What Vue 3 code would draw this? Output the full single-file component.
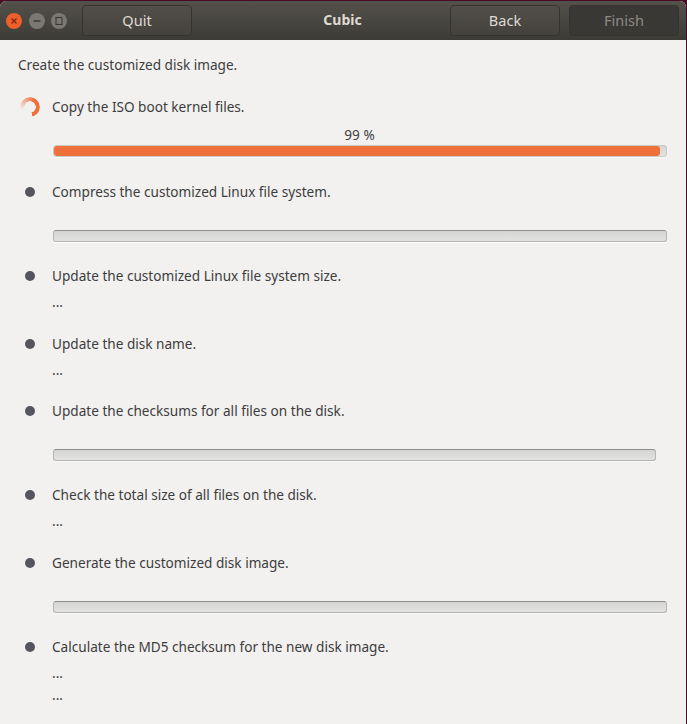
<template>
  <div class="window">
    <header class="titlebar">
      <div class="win-controls">
        <span class="win-btn close"><svg width="10" height="10" viewBox="0 0 10 10"><path d="M2.5 2.5l5 5M7.5 2.5l-5 5" stroke="#7a2a10" stroke-width="1.3" fill="none"/></svg></span>
        <span class="win-btn"><svg width="10" height="10" viewBox="0 0 10 10"><path d="M1.5 5h7" stroke="#3a3833" stroke-width="1.3" fill="none"/></svg></span>
        <span class="win-btn"><svg width="10" height="10" viewBox="0 0 10 10"><rect x="2" y="1.5" width="6" height="7" stroke="#3a3833" stroke-width="1.1" fill="none"/></svg></span>
      </div>
      <button class="head-btn quit">Quit</button>
      <div class="title">Cubic</div>
      <button class="head-btn">Back</button>
      <button class="head-btn finish" disabled>Finish</button>
    </header>

    <main class="content">
      <p class="intro">Create the customized disk image.</p>

      <div v-for="step in steps" :key="step.label" class="step">
        <div class="step-row">
          <span class="step-icon">
            <span v-if="step.active" class="spinner"></span>
            <span v-else class="dot"></span>
          </span>
          <span class="step-label">{{ step.label }}</span>
        </div>

        <div v-if="step.percent" class="percent">{{ step.percent }} %</div>
        <div v-if="step.bar" class="bar" :class="{ narrow: step.narrow, first: step.percent }">
          <div v-if="step.percent" class="fill" :style="{ width: step.percent + '%' }"></div>
        </div>
        <div v-for="n in step.dots" :key="n" class="dots">...</div>
      </div>
    </main>
  </div>
</template>

<script setup>
const steps = [
  { label: 'Copy the ISO boot kernel files.', active: true, bar: true, percent: 99 },
  { label: 'Compress the customized Linux file system.', bar: true },
  { label: 'Update the customized Linux file system size.', dots: 1 },
  { label: 'Update the disk name.', dots: 1 },
  { label: 'Update the checksums for all files on the disk.', bar: true, narrow: true },
  { label: 'Check the total size of all files on the disk.', dots: 1 },
  { label: 'Generate the customized disk image.', bar: true },
  { label: 'Calculate the MD5 checksum for the new disk image.', dots: 2 }
]
</script>

<style>
html, body {
  margin: 0;
  background: #4a0a24;
}
</style>

<style scoped>
.window {
  width: 686px;
  height: 723px;
  margin-top: 1px;
  box-sizing: border-box;
  display: flex;
  flex-direction: column;
  background: #f2f1f0;
  border-radius: 6px 6px 0 0;
  overflow: hidden;
  font-family: "Noto Sans", sans-serif;
}
.titlebar {
  height: 39px;
  flex: none;
  display: flex;
  align-items: center;
  padding: 0 7px 0 6px;
  box-sizing: border-box;
  background: linear-gradient(#54514b, #3c3b36);
}
.win-controls {
  display: flex;
  gap: 6.5px;
  margin-right: 15px;
}
.win-btn {
  width: 16px;
  height: 16px;
  border-radius: 50%;
  display: flex;
  align-items: center;
  justify-content: center;
  background: #7a7871;
}
.win-btn.close {
  background: #ee5f2c;
}
.head-btn {
  width: 110px;
  height: 31px;
  box-sizing: border-box;
  border: 1px solid #35342f;
  border-radius: 4px;
  background: linear-gradient(#524f49, #44423d);
  color: #dfdbd2;
  font-family: inherit;
  font-size: 14.5px;
  padding: 0 0 2px;
}
.head-btn.finish {
  margin-left: 9px;
  background: #393834;
  color: #8d8a83;
}
.title {
  flex: 1;
  text-align: center;
  color: #dfdbd2;
  font-size: 14px;
  font-weight: 700;
  padding: 0 0 2px 43px;
}
.content {
  flex: 1;
  padding: 15px 19px 0 18px;
  color: #3d3d3d;
  font-size: 13.6px;
}
.intro {
  margin: 0 0 22px;
  line-height: 20px;
}
.step {
  margin-bottom: 21.5px;
}
.step-row {
  display: flex;
  align-items: center;
  height: 20px;
}
.step-label {
  padding-bottom: 1px;
}
.step-icon {
  width: 34px;
  flex: none;
  display: flex;
  justify-content: center;
  padding-right: 11px;
  box-sizing: border-box;
}
.dot {
  width: 10px;
  height: 10px;
  border-radius: 50%;
  background: #55555f;
}
.spinner {
  width: 20px;
  height: 20px;
  border-radius: 50%;
  background: conic-gradient(from 250deg, rgba(240, 110, 60, 0) 0deg, #f0703c 140deg, #f0703c 275deg, rgba(240, 110, 60, 0) 276deg);
  -webkit-mask: radial-gradient(circle, transparent 5.5px, #000 6px);
  mask: radial-gradient(circle, transparent 5.5px, #000 6px);
}
.percent {
  margin: 8px 0 0 34px;
  text-align: center;
  line-height: 20px;
}
.bar {
  margin: 28px 0 24px 35px;
  height: 12px;
  box-sizing: border-box;
  border: 1px solid #b4b4b0;
  border-top-color: #8f8f8b;
  border-radius: 3px;
  background: linear-gradient(#d5d6d3, #e2e3e0);
  box-shadow: 0 1px 0 #fbfbfa;
  overflow: hidden;
}
.bar.first {
  margin-top: 0;
  margin-bottom: 25px;
  border-color: #c9c9c6;
}
.bar.narrow {
  margin-right: 11px;
}
.fill {
  height: 100%;
  background: #f0703c;
  border-radius: 3px;
}
.dots {
  margin: 6px 0 0 34px;
  line-height: 20px;
}
.dots + .dots {
  margin-top: 2px;
}
</style>
